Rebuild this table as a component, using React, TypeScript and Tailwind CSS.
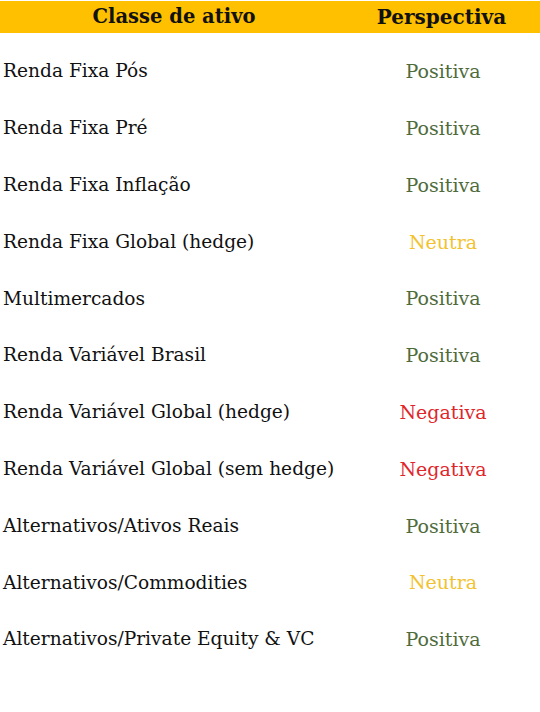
const rows: { name: string; view: "Positiva" | "Neutra" | "Negativa" }[] = [
  { name: "Renda Fixa Pós", view: "Positiva" },
  { name: "Renda Fixa Pré", view: "Positiva" },
  { name: "Renda Fixa Inflação", view: "Positiva" },
  { name: "Renda Fixa Global (hedge)", view: "Neutra" },
  { name: "Multimercados", view: "Positiva" },
  { name: "Renda Variável Brasil", view: "Positiva" },
  { name: "Renda Variável Global (hedge)", view: "Negativa" },
  { name: "Renda Variável Global (sem hedge)", view: "Negativa" },
  { name: "Alternativos/Ativos Reais", view: "Positiva" },
  { name: "Alternativos/Commodities", view: "Neutra" },
  { name: "Alternativos/Private Equity & VC", view: "Positiva" },
];

const viewColor = {
  Positiva: "text-[#4f6b3c]",
  Neutra: "text-[#f2c230]",
  Negativa: "text-[#e0262b]",
};

export default function App() {
  return (
    <div className="w-[540px] h-[712px] bg-white font-['DejaVu_Serif',serif] overflow-hidden">
      {/* header bar */}
      <div className="mt-px h-[32px] bg-[#ffc000] grid grid-cols-[348px_187px] items-center font-bold text-[#111]">
        <div className="text-center text-[19.5px]">Classe de ativo</div>
        <div className="text-center text-[20px]">Perspectiva</div>
      </div>

      <div className="pt-[10px]">
        {rows.map((r) => (
          <div key={r.name} className="h-[56.8px] grid grid-cols-[348px_190px] items-center">
            <div className="pl-[3px] text-[18.6px] text-[#111]">{r.name}</div>
            <div className={`text-center text-[19px] ${viewColor[r.view]}`}>{r.view}</div>
          </div>
        ))}
      </div>
    </div>
  );
}
